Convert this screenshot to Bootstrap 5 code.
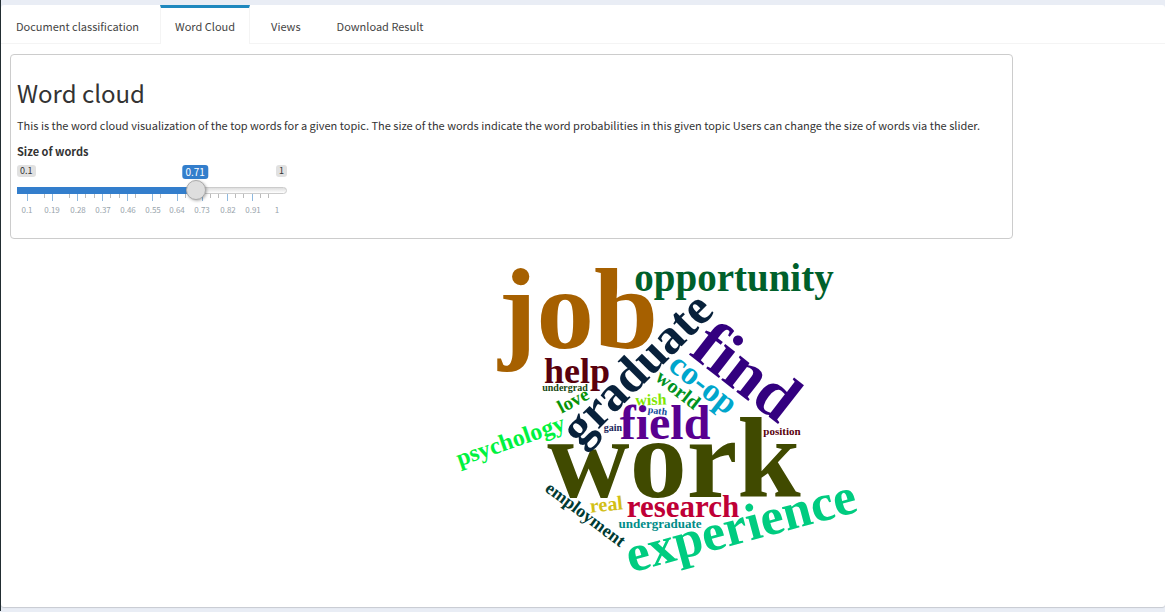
<!DOCTYPE html>
<html lang="en">
<head>
<meta charset="utf-8">
<meta name="viewport" content="width=device-width, initial-scale=1">
<title>Word Cloud</title>
<link href="https://cdn.jsdelivr.net/npm/bootstrap@5.3.0/dist/css/bootstrap.min.css" rel="stylesheet">
<style>
  body { font-family: "Source Sans Pro", "Noto Sans CJK SC", sans-serif; font-size: 11px; line-height: 20px; color: #333; background: #e9edf5; border-left: 1px solid #222d32; }
  .page-wrap { padding: 5px 0 4px; }
  .tab-box { background: #fff; border-radius: 3px; box-shadow: 0 1px 1px rgba(0,0,0,.15); }
  .tab-strip { border-bottom: 1px solid #f4f4f4; gap: 6px; }
  .tab-strip .nav-link { color: #444; border: 1px solid transparent; border-width: 3px 1px 0; border-radius: 0; padding: 8px 14px; margin-bottom: -1px; }
  .tab-strip .nav-link.active { background: #fff; border-color: #1f88be #f4f4f4 #fff; color: #444; }
  .tab-body { padding: 10px 9px 0; }
  .intro-panel { width: fit-content; min-width: 87.5%; max-width: 100%; border: 1px solid #ccc; border-radius: 4px; padding: 22px 6px 16px; }
  .intro-panel h1 { font-size: 24px; line-height: 32px; font-weight: 400; margin: 0 0 6px; }
  .intro-panel p { margin: 0 0 6px; }
  .size-slider { width: 270px; padding-top: 4px; }
  .tag { font-size: 9px; line-height: 12px; height: 12px; padding: 0 3px; border-radius: 3px; background: #e1e1e1; color: #333; }
  .tag-now { position: absolute; left: 66%; top: 0; transform: translateX(-50%); font-size: 10px; line-height: 14px; height: 14px; background: #337ecc; color: #fff; }
  .range-holder { padding-top: 2px; height: 17px; }
  .range-bar { appearance: none; display: block; width: 100%; height: 22px; margin: 0; border-radius: 4px; background: linear-gradient(to right, #337ecc 66%, transparent 66%) center / 100% 7px no-repeat; }
  .range-bar::-webkit-slider-runnable-track { height: 22px; background: transparent; }
  .range-bar::-webkit-slider-thumb { appearance: none; width: 20px; height: 20px; margin-top: 1px; border: 1px solid #ababab; border-radius: 50%; background: #dedede; box-shadow: 1px 1px 3px rgba(0,0,0,.3); }
  .groove { position: absolute; left: 0; right: 0; top: 10px; height: 7px; border: 1px solid #ccc; border-radius: 4px; background: linear-gradient(#dedede, #fff); }
  .scale text { font-size: 8px; fill: #99a4ac; text-anchor: middle; }
  .cloud-area { padding: 12px 6px 16px 14%; }
  .cloud-area text { font-family: "Liberation Serif", serif; font-weight: 700; text-anchor: middle; }
</style>
</head>
<body>
<div class="page-wrap">
  <main class="tab-box">
    <ul class="nav tab-strip">
      <li class="nav-item"><a class="nav-link" href="#classification">Document classification</a></li>
      <li class="nav-item"><a class="nav-link active" aria-current="page" href="#cloud">Word Cloud</a></li>
      <li class="nav-item"><a class="nav-link" href="#views">Views</a></li>
      <li class="nav-item"><a class="nav-link" href="#download">Download Result</a></li>
    </ul>
    <div id="cloud" class="tab-body">
      <section class="intro-panel">
        <h1>Word cloud</h1>
        <p>This is the word cloud visualization of the top words for a given topic. The size of the words indicate the word probabilities in this given topic Users can change the size of words via the slider.</p>
        <label class="fw-bold d-block" for="size">Size of words</label>
        <div class="size-slider">
          <div class="position-relative d-flex justify-content-between">
            <span class="tag">0.1</span><output class="tag tag-now" for="size">0.71</output><span class="tag">1</span>
          </div>
          <div class="range-holder position-relative">
            <div class="groove"></div>
            <input class="range-bar position-relative" id="size" type="range" min="0.1" max="1" step="0.01" value="0.71">
          </div>
          <svg class="scale d-block" width="270" height="28" aria-hidden="true">
            <path stroke="#428bca" stroke-opacity=".6" d="M10.5 0v7M35.5 0v7M60.5 0v7M85.5 0v7M110.5 0v7M135.5 0v7M160.5 0v7M185.5 0v7M210.5 0v7M235.5 0v7"/>
            <path stroke="#bbb" d="M27.5 0v4M52.5 0v4M68.5 0v4M77.5 0v4M93.5 0v4M102.5 0v4M118.5 0v4M143.5 0v4M168.5 0v4M193.5 0v4M201.5 0v4M218.5 0v4M226.5 0v4M243.5 0v4M251.5 0v4"/>
            <text x="10" y="19">0.1</text><text x="35" y="19">0.19</text><text x="61" y="19">0.28</text><text x="86" y="19">0.37</text><text x="111" y="19">0.46</text><text x="136" y="19">0.55</text><text x="160" y="19">0.64</text><text x="185" y="19">0.73</text><text x="211" y="19">0.82</text><text x="236" y="19">0.91</text><text x="260" y="19">1</text>
          </svg>
        </div>
      </section>
      <div class="cloud-area d-flex justify-content-center">
        <svg width="440" height="340" viewBox="440 250 440 340" role="img" aria-label="Word cloud of topic words">
          <text transform="translate(674 496)" font-size="114" fill="#404a00">work</text>
          <text transform="translate(578 347)" font-size="115" fill="#a66000">job</text>
          <text transform="translate(733 388) rotate(38)" font-size="67" fill="#33007f">find</text>
          <text transform="translate(745 541) rotate(-15)" font-size="52" fill="#00cc80">experience</text>
          <text transform="translate(648 379) rotate(-45)" font-size="50" fill="#08213b">graduate</text>
          <text transform="translate(665 438)" font-size="48" fill="#590090">field</text>
          <text transform="translate(734 290)" font-size="39" fill="#00602b">opportunity</text>
          <text transform="translate(577 382)" font-size="36" fill="#59000d">help</text>
          <text transform="translate(697 391) rotate(38)" font-size="33" fill="#00a6cc">co-op</text>
          <text transform="translate(683 516)" font-size="31" fill="#bf0036">research</text>
          <text transform="translate(513 447) rotate(-19)" font-size="24" fill="#00f240">psychology</text>
          <text transform="translate(674 394) rotate(38)" font-size="20" fill="#009322">world</text>
          <text transform="translate(607 510) rotate(-6)" font-size="20" fill="#d2bf17">real</text>
          <text transform="translate(576 405) rotate(-28)" font-size="19" fill="#079307">love</text>
          <text transform="translate(582 518) rotate(37)" font-size="18" fill="#003a33">employment</text>
          <text transform="translate(651 404) rotate(-2)" font-size="16" fill="#80e600">wish</text>
          <text transform="translate(660 527)" font-size="13" fill="#008c88">undergraduate</text>
          <text transform="translate(782 434)" font-size="11" fill="#59000d">position</text>
          <text transform="translate(657 413) rotate(8)" font-size="10" fill="#0f4a9c">path</text>
          <text transform="translate(565 390)" font-size="10" fill="#17470f">undergrad</text>
          <text transform="translate(613 430)" font-size="10" fill="#1a2459">gain</text>
        </svg>
      </div>
    </div>
  </main>
</div>
<script src="https://cdn.jsdelivr.net/npm/bootstrap@5.3.0/dist/js/bootstrap.bundle.min.js"></script>
</body>
</html>
